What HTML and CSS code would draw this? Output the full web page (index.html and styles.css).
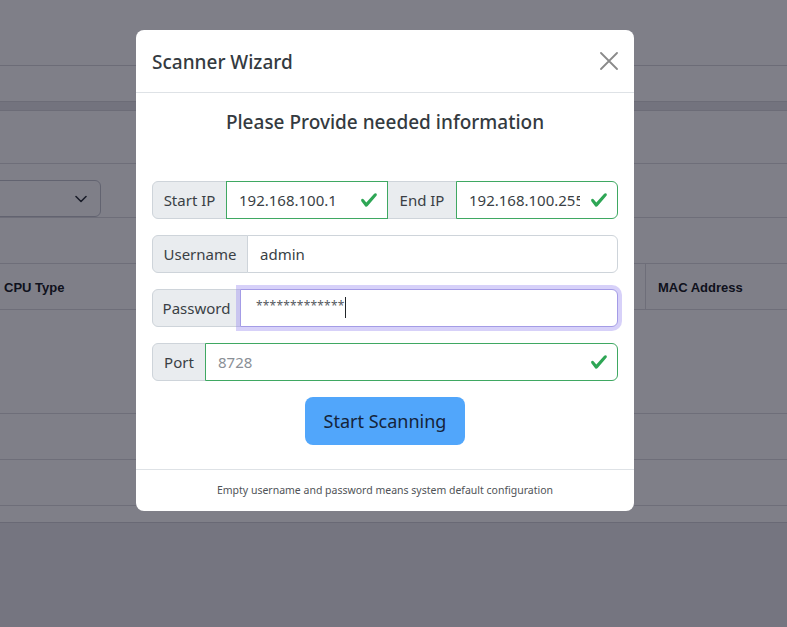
FILE: index.html
```html
<!DOCTYPE html>
<html lang="en">
<head>
<meta charset="utf-8">
<title>Scanner Wizard</title>
<link rel="stylesheet" href="styles.css">
</head>
<body>
<div class="page">
  <div class="topbar"></div>
  <div class="subbar"></div>
  <div class="band"></div>
  <div class="card">
    <div class="card-head"></div>
    <div class="filters">
      <div class="select">
        <svg class="chev" width="12" height="8" viewBox="0 0 12 8"><path d="M1 1.5l5 5 5-5" fill="none" stroke="#343a40" stroke-width="1.6" stroke-linecap="round" stroke-linejoin="round"/></svg>
      </div>
    </div>
    <div class="spacer"></div>
    <div class="thead">
      <div class="th th-cpu">CPU Type</div>
      <div class="th th-mac">MAC Address</div>
    </div>
    <div class="tr tr-tall"></div>
    <div class="tr"></div>
    <div class="tr"></div>
    <div class="tr-end"></div>
  </div>
</div>

<div class="backdrop"></div>

<div class="modal">
  <div class="modal-header">
    <div class="modal-title">Scanner Wizard</div>
    <svg class="close" width="18" height="18" viewBox="0 0 18 18"><path d="M1 1L17 17M17 1L1 17" stroke="#8a8a8a" stroke-width="1.8" stroke-linecap="round"/></svg>
  </div>
  <div class="modal-body">
    <div class="lead">Please Provide needed information</div>

    <div class="group">
      <div class="addon w-start">Start IP</div>
      <div class="field valid mid">192.168.100.1<svg class="ok" viewBox="0 0 8 8"><path fill="#2ea655" d="M2.3 6.73.6 4.53c-.4-1.04.46-1.4 1.1-.8l1.1 1.4 3.4-3.8c.6-.63 1.6-.27 1.2.7l-4 4.6c-.43.5-.8.4-1.1.1z"/></svg></div>
      <div class="addon mid w-end">End IP</div>
      <div class="field valid last">192.168.100.255<svg class="ok" viewBox="0 0 8 8"><path fill="#2ea655" d="M2.3 6.73.6 4.53c-.4-1.04.46-1.4 1.1-.8l1.1 1.4 3.4-3.8c.6-.63 1.6-.27 1.2.7l-4 4.6c-.43.5-.8.4-1.1.1z"/></svg></div>
    </div>

    <div class="group">
      <div class="addon w-user">Username</div>
      <div class="field last">admin</div>
    </div>

    <div class="group">
      <div class="addon w-pass">Password</div>
      <div class="field last focus"><span class="stars">*************</span><span class="caret"></span></div>
    </div>

    <div class="group">
      <div class="addon w-port">Port</div>
      <div class="field valid last placeholder">8728<svg class="ok" viewBox="0 0 8 8"><path fill="#2ea655" d="M2.3 6.73.6 4.53c-.4-1.04.46-1.4 1.1-.8l1.1 1.4 3.4-3.8c.6-.63 1.6-.27 1.2.7l-4 4.6c-.43.5-.8.4-1.1.1z"/></svg></div>
    </div>

    <div class="actions">
      <button class="btn" type="button">Start Scanning</button>
    </div>
  </div>
  <div class="modal-footer">Empty username and password means system default configuration</div>
</div>
</body>
</html>
```

FILE: styles.css
```css
html, body {
  margin: 0;
  padding: 0;
  height: 100%;
}
body {
  background: #ebebef;
  font-family: "Noto Sans", "Open Sans", sans-serif;
  overflow: hidden;
}

/* background page */
.page {
  background: #ebebef;
}
.topbar {
  height: 65px;
  background: #fff;
  border-bottom: 1px solid #d8d8dd;
}
.subbar {
  height: 35px;
  background: #fff;
}
.band {
  height: 8px;
  background: #e6e6ea;
  border-top: 1px solid #d8d8dd;
}
.card {
  background: #fff;
  border-top: 1px solid #d8d8dd;
  border-bottom: 1px solid #d2d2d8;
}
.card-head {
  height: 52px;
  border-bottom: 1px solid #dcdce1;
}
.filters {
  height: 54px;
  border-bottom: 1px solid #dcdce1;
  padding-top: 16px;
  box-sizing: border-box;
}
.select {
  width: 121px;
  height: 37px;
  margin-left: -20px;
  box-sizing: border-box;
  border: 1px solid #c4c7cf;
  border-radius: 6px;
  display: flex;
  align-items: center;
  justify-content: flex-end;
  padding-right: 13px;
}
.spacer {
  height: 45px;
  border-bottom: 1px solid #dcdce1;
}
.thead {
  height: 45px;
  border-bottom: 1px solid #dcdce1;
  display: flex;
}
.th {
  font-family: "Liberation Sans", Arial, sans-serif;
  font-weight: bold;
  font-size: 13px;
  color: #212529;
  display: flex;
  align-items: center;
  padding-top: 1px;
}
.th-cpu {
  flex: 1;
  padding-left: 4px;
}
.th-mac {
  width: 129px;
  padding-left: 12px;
  border-left: 1px solid #dcdce1;
}
.tr {
  height: 45px;
  border-bottom: 1px solid #dcdce1;
}
.tr-tall {
  height: 103px;
}
.tr-end {
  height: 16px;
}

.backdrop {
  position: fixed;
  inset: 0;
  background: rgba(0, 0, 18, 0.5);
}

/* modal */
.modal {
  position: absolute;
  top: 30px;
  left: 136px;
  width: 498px;
  background: #fff;
  border-radius: 8px;
  color: #212529;
}
.modal-header {
  display: flex;
  align-items: center;
  justify-content: space-between;
  padding: 16px 16px;
  border-bottom: 1px solid #dee2e6;
}
.modal-title {
  font-size: 19px;
  line-height: 30px;
  font-weight: 500;
  color: #343a40;
  position: relative;
  top: 1px;
}
.close {
  display: block;
  margin-top: -1px;
}
.modal-body {
  padding: 16px;
}
.lead {
  text-align: center;
  font-size: 19px;
  line-height: 30px;
  font-weight: 500;
  color: #343a40;
  margin-top: -2px;
  margin-bottom: 44px;
}
.group {
  display: flex;
  height: 38px;
  margin-bottom: 16px;
  font-size: 15px;
  line-height: 24px;
}
.addon {
  box-sizing: border-box;
  background: #e9ecef;
  border: 1px solid #ced4da;
  border-radius: 6px 0 0 6px;
  padding: 6px 0;
  text-align: center;
  color: #3a3f45;
  white-space: nowrap;
}
.addon.mid {
  border-radius: 0;
  margin-left: -1px;
}
.w-start { width: 75px; }
.w-end { width: 70px; }
.w-user { width: 96px; }
.w-pass { width: 89px; }
.w-port { width: 54px; }

.field {
  position: relative;
  flex: 1;
  min-width: 0;
  box-sizing: border-box;
  border: 1px solid #ced4da;
  margin-left: -1px;
  padding: 6px 12px;
  background: #fff;
  color: #3a3f45;
  white-space: nowrap;
  overflow: hidden;
}
.field.mid {
  border-radius: 0;
  position: relative;
  z-index: 1;
}
.field.last {
  border-radius: 0 6px 6px 0;
}
.field.valid {
  border-color: #3fa862;
  padding-right: 36px;
  z-index: 1;
}
.field.placeholder {
  color: #8a8f96;
}
.ok {
  position: absolute;
  right: 9px;
  top: 9px;
  width: 18px;
  height: 18px;
  background: #fff;
  box-shadow: -10px 0 0 #fff;
}
.field.focus {
  border-color: #a49ce6;
  box-shadow: 0 0 0 4px rgba(150, 135, 240, 0.38);
  overflow: visible;
  z-index: 2;
  padding-left: 15px;
  display: flex;
  align-items: center;
}
.stars {
  font-size: 12px;
  letter-spacing: 0.2px;
  color: #55595e;
  line-height: 24px;
  position: relative;
  top: -2px;
}
.caret {
  display: inline-block;
  width: 1px;
  height: 21px;
  background: #212529;
  margin-left: 0;
  position: relative;
  top: -1px;
}
.actions {
  display: flex;
  justify-content: center;
  margin-bottom: 8px;
}
.btn {
  font-family: inherit;
  font-size: 18px;
  line-height: 30px;
  padding: 9px 0;
  width: 160px;
  height: 48px;
  white-space: nowrap;
  border: none;
  border-radius: 8px;
  background: #51a6fb;
  color: #15243a;
}
.modal-footer {
  border-top: 1px solid #dee2e6;
  padding: 12px;
  text-align: center;
  font-size: 10.5px;
  line-height: 17px;
  color: #4f5357;
}
```
